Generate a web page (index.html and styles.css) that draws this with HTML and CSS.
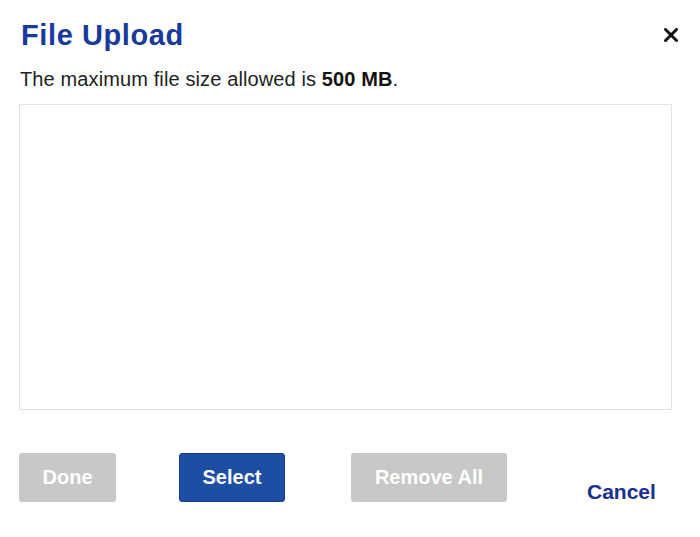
FILE: index.html
```html
<!DOCTYPE html>
<html>
<head>
<meta charset="utf-8">
<link rel="stylesheet" href="styles.css">
</head>
<body>
<div class="dialog">
  <div class="header">
    <h1 class="title">File Upload</h1>
    <button class="close" aria-label="Close">
      <svg width="14" height="14" viewBox="0 0 14 14"><path d="M1.5 1.5L12.5 12.5M12.5 1.5L1.5 12.5" stroke="#111" stroke-width="3" stroke-linecap="square"/></svg>
    </button>
  </div>
  <p class="note">The maximum file size allowed is <b>500 MB</b>.</p>
  <div class="dropzone"></div>
  <div class="actions">
    <button class="btn disabled">Done</button>
    <button class="btn primary">Select</button>
    <button class="btn disabled wide">Remove All</button>
    <a class="cancel" href="#">Cancel</a>
  </div>
</div>
</body>
</html>
```

FILE: styles.css
```css
* { box-sizing: border-box; }
html, body { margin: 0; padding: 0; background: #fff; }
body { font-family: "Liberation Sans", Arial, sans-serif; }
.dialog {
  width: 700px;
  height: 537px;
  padding: 16px 29px 0 19px;
}
.header {
  display: flex;
  align-items: center;
  justify-content: space-between;
  height: 38px;
}
.title {
  margin: 0 0 0 2px;
  font-size: 29px;
  font-weight: bold;
  color: #173a9b;
  letter-spacing: 0.6px;
}
.close {
  border: 0;
  background: none;
  padding: 0;
  margin: 0 -7px 0 0;
  width: 14px;
  height: 14px;
  display: flex;
}
.note {
  margin: 13px 0 0 1px;
  font-size: 20px;
  color: #222;
  line-height: 24px;
  letter-spacing: 0.12px;
}
.note b { color: #111; }
.dropzone {
  margin-top: 13px;
  width: 653px;
  height: 306px;
  border: 1px solid #e2e2e2;
}
.actions {
  display: flex;
  align-items: flex-start;
  margin-top: 43px;
}
.btn {
  height: 49px;
  padding: 0;
  border: 0;
  border-radius: 3px;
  font-family: "Liberation Sans", Arial, sans-serif;
  font-size: 20px;
  font-weight: bold;
  color: #fff;
}
.btn.disabled { background: #c8c8c8; width: 97px; }
.btn.primary {
  margin-left: 63px;
  width: 106px;
  background: #1e4ea3;
  border: 1px solid #153e88;
}
.btn.wide { margin-left: 66px; width: 156px; }
.cancel {
  margin: 27px 0 0 80px;
  font-size: 21px;
  font-weight: bold;
  color: #1a2f8e;
  text-decoration: none;
}
```
